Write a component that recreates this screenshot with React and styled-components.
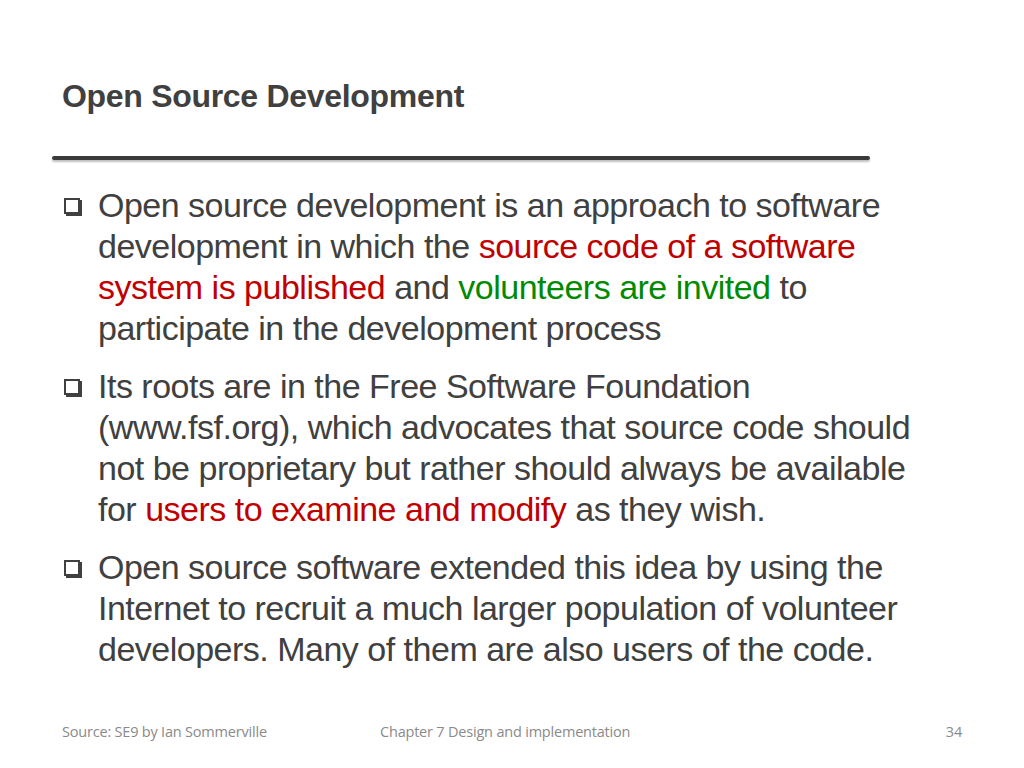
import React from "react";
import styled, { createGlobalStyle } from "styled-components";

const G = createGlobalStyle`
  body { margin: 0; background: #fff; }
`;
const Slide = styled.div`
  width: 1024px; height: 768px; box-sizing: border-box; position: relative;
  padding: 76px 0 0 62px; display: flex; flex-direction: column;
  font-family: "Liberation Sans", Arial, sans-serif; color: #404040;
`;
const Title = styled.h1`
  margin: 0; font-size: 32px; font-weight: bold; line-height: 40px; letter-spacing: -0.3px;
`;
const Rule = styled.div`
  margin: 40px 0 0 -10px; width: 818px; height: 4px; background: #3a3a3a;
  box-shadow: 0 2px 2px rgba(0,0,0,0.25); border-radius: 2px;
`;
const List = styled.div`
  margin-top: 25px; display: flex; flex-direction: column; gap: 17px;
`;
const Item = styled.div`
  display: flex; font-size: 34px; line-height: 41px; letter-spacing: -0.5px; white-space: nowrap;
`;
const Box = styled.span`
  flex: none; width: 16px; height: 16px; border: 2px solid #404040;
  margin: 13px 18px 0 2px; box-shadow: 2px 2px 0 #404040; box-sizing: border-box;
`;
const Text = styled.div``;
const C = styled.span`color: ${p => p.c};`;
const Footer = styled.div`
  position: absolute; top: 722px; left: 62px; width: 900px;
  display: flex; font-family: "Open Sans", sans-serif; font-size: 14.5px; color: #8a8a8a;
  letter-spacing: -0.2px;
`;
const Src = styled.span`width: 318px;`;
const Mid = styled.span`flex: 1;`;

export default function App() {
  const red = "#c00000", green = "#008a00";
  return (
    <Slide>
      <G />
      <Title>Open Source Development</Title>
      <Rule />
      <List>
        <Item><Box /><Text>Open source development is an approach to software<br />development in which the <C c={red}>source code of a software</C><br /><C c={red}>system is published</C> and <C c={green}>volunteers are invited</C> to<br />participate in the development process</Text></Item>
        <Item><Box /><Text>Its roots are in the Free Software Foundation<br />(www.fsf.org), which advocates that source code should<br />not be proprietary but rather should always be available<br />for <C c={red}>users to examine and modify</C> as they wish.</Text></Item>
        <Item><Box /><Text>Open source software extended this idea by using the<br />Internet to recruit a much larger population of volunteer<br />developers. Many of them are also users of the code.</Text></Item>
      </List>
      <Footer><Src>Source: SE9 by Ian Sommerville</Src><Mid>Chapter 7 Design and implementation</Mid><span>34</span></Footer>
    </Slide>
  );
}
